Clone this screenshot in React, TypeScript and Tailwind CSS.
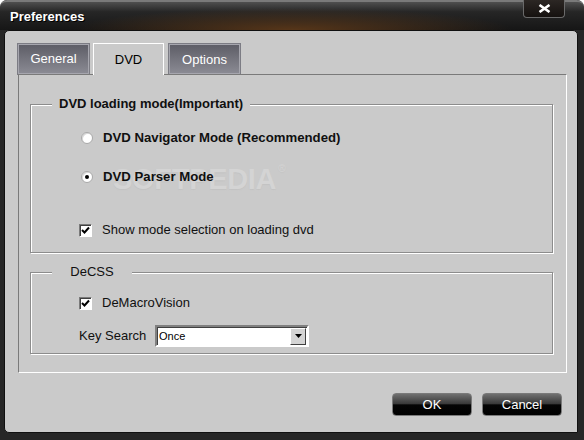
import React from 'react';

const font = "font-['Liberation_Sans',Arial,sans-serif]";

const Radio: React.FC<{ checked?: boolean }> = ({ checked }) => (
  <span className="w-[12px] h-[12px] rounded-full bg-white border border-[#a8a8a8] shadow-[inset_1px_1px_0_#d8d8d8] flex items-center justify-center shrink-0">
    {checked && <span className="w-[4px] h-[4px] rounded-full bg-black" />}
  </span>
);

const Check: React.FC = () => (
  <span className="w-[13px] h-[13px] bg-white border border-t-[#7a7a7a] border-l-[#7a7a7a] border-r-white border-b-white shadow-[inset_1px_1px_0_#404040] flex items-center justify-center shrink-0">
    <svg width="9" height="9" viewBox="0 0 9 9">
      <path d="M1 4 L3.5 6.5 L8 1.5" fill="none" stroke="#000" strokeWidth="2" />
    </svg>
  </span>
);

export default function App() {
  return (
    <div className={`w-[584px] h-[440px] flex flex-col bg-[#262626] rounded-t-[7px] overflow-hidden ${font}`}>
      {/* title bar */}
      <div className="h-[30px] shrink-0 flex items-start justify-between rounded-t-[7px] border-t-2 border-[#7a7a7a] bg-[radial-gradient(ellipse_220px_22px_at_50%_100%,#573619,transparent),linear-gradient(#4f4f4f,#262626_35%,#161616)]">
        <span className="pl-[10px] pt-[5px] text-[13px] font-bold text-white [text-shadow:1px_1px_0_#000]">
          Preferences
        </span>
        <button className="mr-[19px] -mt-[2px] w-[42px] h-[18px] rounded-b-[4px] border border-t-0 border-[#6a6a6a] bg-[linear-gradient(#2c2724,#15110f)] flex items-center justify-center">
          <svg width="13" height="9" viewBox="0 0 13 9">
            <path d="M1.5 1 L11.5 8 M11.5 1 L1.5 8" stroke="#fff" strokeWidth="2.6" />
          </svg>
        </button>
      </div>

      {/* body */}
      <div className="flex-1 ml-[4px] mr-[6px] mb-[7px] bg-[#cacaca] rounded-t-[5px] rounded-bl-[5px] border border-[#101010] flex flex-col pt-[13px] pl-[13px] pr-[11px]">
        {/* tabs */}
        <div className="flex items-end h-[30px] gap-[4px]">
          <div className="w-[71px] h-[30px] bg-[linear-gradient(#5e5e67,#8a8a93)] border border-[#a6a6ae] shadow-[0_0_0_1px_#7c7c84] flex items-center justify-center text-[13px] text-white">
            General
          </div>
          <div className="w-[71px] h-[32px] bg-[#cacaca] border-t border-l border-r border-white flex items-center justify-center text-[13px] text-black -mb-px relative z-10">
            DVD
          </div>
          <div className="ml-[1px] w-[71px] h-[30px] bg-[linear-gradient(#5e5e67,#8a8a93)] border border-[#a6a6ae] shadow-[0_0_0_1px_#7c7c84] flex items-center justify-center text-[13px] text-white pt-[2px]">
            Options
          </div>
        </div>

        {/* tab panel */}
        <div className="w-[549px] h-[299px] border-t border-l border-t-[#7a7a7a] border-l-[#7a7a7a] border-r border-b border-r-white border-b-white pt-[29px] pl-[11px] text-[#101010]">
          {/* group 1 */}
          <div className="relative w-[523px] h-[149px] border border-[#8c8c8c] shadow-[inset_1px_1px_0_#fff,1px_1px_0_#fff] pl-[50px] pt-[23px]">
            <span className="absolute left-[82px] top-[53px] text-[29px] font-bold tracking-[-0.3px] text-[#d4d4d4] [text-shadow:0_1px_1px_#c3c3c3] pointer-events-none select-none">
              SOFTPEDIA
              <span className="absolute -right-[9px] top-[3px] text-[10px] font-normal">®</span>
            </span>
            <span className="absolute -top-[10px] left-[21px] px-[7px] bg-[#cacaca] text-[13px] font-bold leading-[18px]">
              DVD loading mode(Important)
            </span>
            <div className="relative flex items-center h-[20px] gap-[10px]">
              <Radio />
              <span className="text-[13.2px] font-bold">DVD Navigator Mode (Recommended)</span>
            </div>
            <div className="relative flex items-center h-[20px] gap-[10px] mt-[19px]">
              <Radio checked />
              <span className="text-[13.2px] font-bold">DVD Parser Mode</span>
            </div>
            <div className="relative flex items-center h-[20px] gap-[10px] mt-[33px] -ml-[2px]">
              <Check />
              <span className="text-[13px]">Show mode selection on loading dvd</span>
            </div>
          </div>

          {/* group 2 */}
          <div className="relative mt-[19px] w-[523px] h-[82px] border border-[#8c8c8c] shadow-[inset_1px_1px_0_#fff,1px_1px_0_#fff] pl-[48px] pt-[20px]">
            <span className="absolute -top-[10px] left-[21px] w-[80px] text-center bg-[#cacaca] text-[13px] leading-[18px]">
              DeCSS
            </span>
            <div className="flex items-center h-[20px] gap-[10px]">
              <Check />
              <span className="text-[13px]">DeMacroVision</span>
            </div>
            <div className="flex items-center mt-[12px] h-[22px]">
              <span className="text-[13px] w-[76px]">Key Search</span>
              <div className="w-[154px] h-[22px] bg-white border-2 border-t-[#808080] border-l-[#808080] border-r-white border-b-white shadow-[inset_1px_1px_0_#404040] flex items-center justify-between pl-[2px] pr-[1px]">
                <span className="text-[11px] text-black">Once</span>
                <span className="w-[16px] h-[17px] bg-[#d4d4d4] border border-t-white border-l-white border-r-[#404040] border-b-[#404040] flex items-center justify-center">
                  <svg width="7" height="4" viewBox="0 0 7 4">
                    <path d="M0 0 H7 L3.5 4 Z" fill="#000" />
                  </svg>
                </span>
              </div>
            </div>
          </div>
        </div>

        {/* buttons */}
        <div className="flex justify-end gap-[10px] mt-[20px] pr-[4px]">
          <button className="w-[80px] h-[23px] rounded-[4px] border border-[#7a7a7a] bg-[linear-gradient(#707070,#3a3a3a_46%,#050505_52%,#000)] text-white text-[13px]">
            OK
          </button>
          <button className="w-[80px] h-[23px] rounded-[4px] border border-[#7a7a7a] bg-[linear-gradient(#707070,#3a3a3a_46%,#050505_52%,#000)] text-white text-[13px]">
            Cancel
          </button>
        </div>
      </div>
    </div>
  );
}
